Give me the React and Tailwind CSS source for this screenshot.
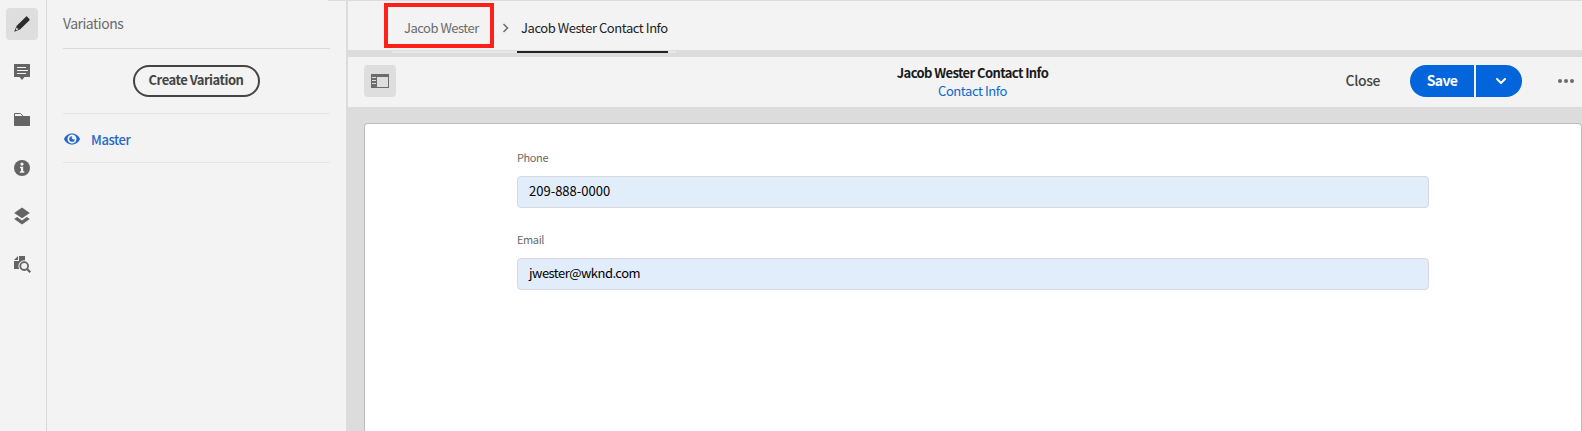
import React from "react";

const railIcons = [
  {
    name: "Edit",
    active: true,
    art: (
      <>
        <path d="M13 .6 15.4 3 Q16 3.7 15.3 4.4L6 13.6 2.5 10 11.7 .9Q12.3 0 13 .6Z" />
        <path d="M2.500 10 6 13.600 .2 15.800Z" />
        <path d="M2.600 11.600 4.400 13.400 2.200 14.300 1.700 13.800Z" fill="#dedede" />
      </>
    ),
  },
  {
    name: "Comments",
    art: (
      <>
        <path d="M.5 0h15a.5.5 0 0 1 .5.5v12a.5.5 0 0 1-.5.5H10.5L8 16 5.5 13H.5a.5.5 0 0 1-.5-.5V.5A.5.5 0 0 1 .5 0Z" />
        <path d="M3 3.5h9M3 6.5h11M3 9.5h9" stroke="#f3f3f3" strokeWidth="1" fill="none" />
      </>
    ),
  },
  {
    name: "Assets",
    art: (
      <>
        <path d="M0 4h16v9.3a.7.7 0 0 1-.7.7H.7a.7.7 0 0 1-.7-.7Z" />
        <path d="M.5 4.500V1.500h6l2.500 2.500" fill="none" stroke="#646464" />
      </>
    ),
  },
  {
    name: "Info",
    art: (
      <>
        <circle cx="8" cy="8" r="8" />
        <circle cx="8" cy="4.100" r="1.600" fill="#f3f3f3" />
        <path d="M6 6.700h3.200v4.600h1.100v1.500H5.900v-1.500H7V8.200H6Z" fill="#f3f3f3" />
      </>
    ),
  },
  {
    name: "Layers",
    art: (
      <>
        <path d="M8 -.500 15.800 4.900 8 10.300.2 4.900Z" />
        <path d="M.2 11.100 3.200 9 8 12.400 12.800 9 15.800 11.100 8 16.500Z" />
      </>
    ),
  },
  {
    name: "Find in page",
    art: (
      <>
        <path d="M5 0h6v13H0V5h5Z" />
        <path d="M0 4 4 0v4Z" />
        <circle cx="10.200" cy="10.100" r="5.800" fill="#f3f3f3" />
        <circle cx="10.200" cy="10.100" r="3.900" fill="#f3f3f3" stroke="#646464" strokeWidth="1.800" />
        <path d="m13 13 3.300 3.200" stroke="#646464" strokeWidth="2.200" fill="none" />
      </>
    ),
  },
];

function Rail() {
  return (
    <nav className="flex w-[47px] shrink-0 flex-col gap-4 border-r border-[#d9d9d9] pl-[6px] pt-2">
      {railIcons.map((icon) => (
        <button
          key={icon.name}
          aria-label={icon.name}
          className={
            icon.active
              ? "flex size-8 items-center justify-center rounded bg-[#dedede] text-[#2c2c2c]"
              : "flex size-8 items-center justify-center rounded text-[#646464]"
          }
        >
          <svg width="16" height="16" viewBox="0 0 16 16" fill="currentColor" className="overflow-visible">
            {icon.art}
          </svg>
        </button>
      ))}
    </nav>
  );
}

function Variations() {
  return (
    <aside className="w-[281px] shrink-0 pl-4 pr-0">
      <div className="w-[267px]">
        <h2 className="h-12 whitespace-nowrap text-[14px] leading-[47px] tracking-[-0.5px] text-[#6a6a6a]">Variations</h2>
        <div className="flex h-[66px] justify-center border-b border-t border-b-[#e4e4e4] border-t-[#d9d9d9] pr-[1px] pt-4">
          <button className="flex h-8 w-[127px] items-center justify-center whitespace-nowrap rounded-full border-2 border-[#444] pb-[2px] text-[13px] font-bold leading-5 tracking-[-0.5px] text-[#444]">
            Create Variation
          </button>
        </div>
        <div className="flex h-[49px] items-center border-b border-[#e4e4e4] pl-[1px] text-[#2468c8]">
          <svg width="16" height="12" viewBox="0 0 16 12" fill="currentColor" className="mt-[2px]">
            <path
              fillRule="evenodd"
              d="M8 .5C4 .5 1 3.200 0 6c1 2.800 4 5.500 8 5.500s7-2.700 8-5.500C15 3.200 12 .5 8 .5ZM8 1.500a4.500 4.500 0 1 1 0 9 4.500 4.500 0 1 1 0-9Z"
            />
            <path d="M8.300 3.200A2.800 2.800 0 1 0 10.800 5.900 1.600 1.600 0 1 1 8.300 3.200Z" />
          </svg>
          <span className="ml-[11px] mt-[3px] text-[13px] font-medium leading-5 tracking-[-0.4px]">Master</span>
        </div>
      </div>
    </aside>
  );
}

function Breadcrumbs() {
  return (
    <header className="relative flex h-[57px] border-b-[7px] border-t border-[#dcdcdc] bg-[#f3f3f3] pl-9">
      <div className="absolute left-11 top-[50px] h-[2px] w-[284px] bg-[#e8e8e8]" />
      <div className="mt-[2px] flex h-[45px] w-[110px] border-4 border-[#ff201a] pl-[16px] text-[13px] leading-[42px] tracking-[-0.5px] text-[#6b6b6b]">
        <span className="whitespace-nowrap">Jacob Wester</span>
      </div>
      <svg width="7" height="10" viewBox="0 0 7 10" className="ml-[8px] mt-[22px]" fill="none">
        <path d="m1.500 1 4 4-4 4" stroke="#6b6b6b" strokeWidth="1.500" />
      </svg>
      <div className="relative ml-[8px] h-[52px] w-[151px] shrink-0 border-b-2 border-[#222] pl-[4px] text-[13px] leading-[54px] tracking-[-0.44px] text-[#222]">
        <span className="whitespace-nowrap">Jacob Wester Contact Info</span>
      </div>
    </header>
  );
}

function Toolbar() {
  return (
    <div className="grid h-[50px] grid-cols-[1fr_auto_1fr] bg-[#f3f3f3] pl-4">
      <button aria-label="Toggle side panel" className="mt-2 flex size-8 items-center justify-center rounded bg-[#dedede]">
        <svg width="18" height="14" viewBox="0 0 18 14">
          <path d="M0 0h18v14H0Z" fill="#6b6b6b" />
          <path d="M6 3h11v10H6Z" fill="#dedede" />
          <path d="M1 3.500h4M1 6.500h4M1 9.500h4" stroke="#dedede" />
        </svg>
      </button>
      <div className="flex flex-col items-center whitespace-nowrap pr-px pt-[7px] text-[13px] leading-[18px]">
        <h1 className="font-bold tracking-[-0.6px] text-[#1a1a1a]">Jacob Wester Contact Info</h1>
        <a className="tracking-[-0.43px] text-[#0a69ce]">Contact Info</a>
      </div>
      <div className="flex items-start justify-end pr-2 pt-2">
        <button className="mr-[30px] flex h-8 items-center pb-[2px] text-[14px] font-medium leading-6 tracking-[-0.4px] text-[#444]">Close</button>
        <button className="flex h-8 w-16 items-center justify-center rounded-l-full bg-[#0265dc] pb-[2px] text-[14px] font-bold leading-6 tracking-[-0.6px] text-white">Save</button>
        <button aria-label="More save options" className="ml-[2px] flex h-8 w-[46px] items-center justify-center rounded-r-full bg-[#0265dc] pl-[4px]">
          <svg width="10" height="7" viewBox="0 0 10 7" fill="none">
            <path d="m1 1 4 4 4-4" stroke="white" strokeWidth="2" strokeLinecap="round" strokeLinejoin="round" />
          </svg>
        </button>
        <button aria-label="More actions" className="ml-[36px] flex h-8 items-center">
          <svg width="16" height="4" viewBox="0 0 16 4" fill="#6b6b6b">
            <circle cx="2" cy="2" r="2" />
            <circle cx="8" cy="2" r="2" />
            <circle cx="14" cy="2" r="2" />
          </svg>
        </button>
      </div>
    </div>
  );
}

function Field({ label, value, valueTracking }) {
  return (
    <label className="mb-[18px] block w-[912px]">
      <span className="block h-6 text-[11px] leading-[27px] tracking-[-0.4px] text-[#6a6a6a]">{label}</span>
      <div className="mt-2 h-8 rounded border border-[#d8d8dc] bg-[#e1edfb] pl-[11px] text-[13px] leading-[27px] text-black">
        <span className={valueTracking}>{value}</span>
      </div>
    </label>
  );
}

export default function App() {
  return (
    <div className="flex h-[431px] w-[1582px] overflow-hidden bg-[#f3f3f3] font-['Noto_Sans_CJK_SC','Noto_Sans',sans-serif]">
      <Rail />
      <Variations />
      <div className="h-[431px] w-[20px] shrink-0 border-r-2 border-t border-[#dcdcdc]" />
      <main className="flex min-w-0 flex-1 flex-col bg-[#dcdcdc]">
        <Breadcrumbs />
        <Toolbar />
        <section className="ml-4 mt-4 flex-1 rounded-t border border-b-0 border-[#bcbcbc] bg-white pl-[152px] pt-5">
          <Field label="Phone" value="209-888-0000" valueTracking="tracking-normal" />
          <Field label="Email" value="jwester@wknd.com" valueTracking="tracking-[-0.53px]" />
        </section>
      </main>
    </div>
  );
}
